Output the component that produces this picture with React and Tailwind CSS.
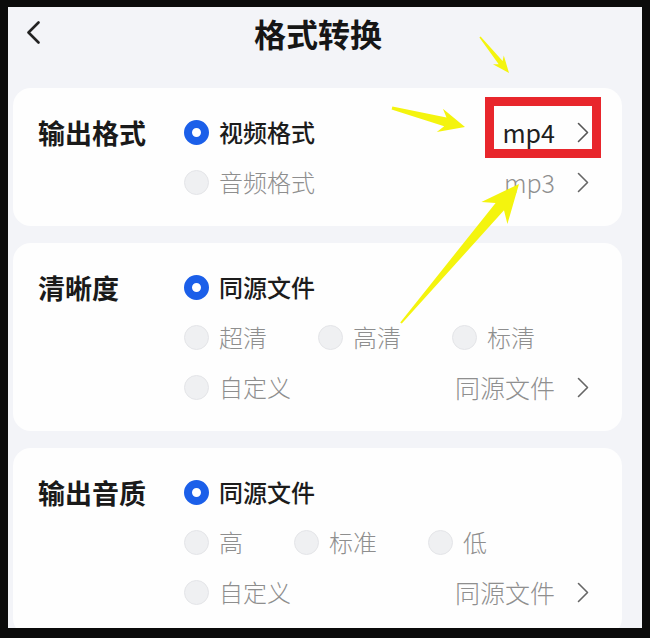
import React from "react";

const cjk = { fontFamily: '"Noto Sans CJK SC", "Noto Sans", sans-serif' };

function Chevron({ className = "" }) {
  return (
    <svg width="12" height="21" viewBox="0 0 12 21" className={className}>
      <path d="M1.5 1.5 L10.5 10.5 L1.5 19.5" fill="none" stroke="currentColor" strokeWidth="1.6" strokeLinecap="round" strokeLinejoin="round" />
    </svg>
  );
}

function Radio({ checked }) {
  if (checked) {
    return <span className="block w-[25px] h-[25px] rounded-full border-[8px] border-[#1b5fe9] bg-white shrink-0" />;
  }
  return <span className="block w-[25px] h-[25px] rounded-full border border-[#e4e5e8] bg-[#eff0f2] shrink-0" />;
}

function Option({ label, checked }) {
  return (
    <div className="flex items-center gap-[10px]">
      <Radio checked={checked} />
      <span className={checked ? "text-[24px] leading-none text-[#1c1c1c] font-medium" : "text-[24px] leading-none text-[#8e8e8e] font-light"}>
        {label}
      </span>
    </div>
  );
}

function Value({ text, dark }) {
  return (
    <div className="flex items-center gap-[22px]">
      <span className={dark ? "text-[25px] leading-none text-[#1f1f1f]" : "text-[25px] leading-none text-[#8f8f8f] font-light"}>{text}</span>
      <Chevron className={dark ? "text-[#555]" : "text-[#666]"} />
    </div>
  );
}

function Card({ label, rows }) {
  return (
    <div className="bg-[#fefefe] rounded-[18px] ml-[5px] mr-[20px] pl-[25px] pr-[33px] py-[19px] flex">
      <div className="w-[146px] h-[50px] flex items-center shrink-0">
        <span className="text-[27px] leading-none font-semibold text-[#1a1a1a]">{label}</span>
      </div>
      <div className="flex-1 flex flex-col">
        {rows.map((row, i) => (
          <div key={i} className="h-[50px] flex items-center justify-between">
            <div className="flex items-center gap-[51px]">
              {row.options.map((o) => (
                <Option key={o.label} label={o.label} checked={o.checked} />
              ))}
            </div>
            {row.value && <Value text={row.value} dark={row.dark} />}
          </div>
        ))}
      </div>
    </div>
  );
}

const arrows = [
  { t: [480, 37], p: [509, 73], L: 17, H: 7, w0: 1.5, w1: 5 },
  { t: [392, 108], p: [465, 127], L: 26, H: 12, w0: 3, w1: 9 },
  { t: [401, 323], p: [519, 184], L: 38, H: 17, w0: 2, w1: 11 },
];

function arrowPoints({ t, p, L, H, w0, w1 }) {
  const dx = p[0] - t[0];
  const dy = p[1] - t[1];
  const len = Math.hypot(dx, dy);
  const d = [dx / len, dy / len];
  const n = [-d[1], d[0]];
  const at = (base, along, side) => [base[0] + d[0] * along + n[0] * side, base[1] + d[1] * along + n[1] * side];
  const pts = [
    at(t, 0, w0 / 2),
    at(p, -L * 0.78, w1 / 2),
    at(p, -L, H),
    p,
    at(p, -L, -H),
    at(p, -L * 0.78, -w1 / 2),
    at(t, 0, -w0 / 2),
  ];
  return pts.map((q) => q[0].toFixed(1) + "," + q[1].toFixed(1)).join(" ");
}

export default function App() {
  return (
    <div className="relative w-[650px] h-[638px] bg-[#0b0b0b] pt-[7px] pl-[8px] pr-[8px] pb-[10px]" style={cjk}>
      <div className="h-full bg-[#f3f4f8] overflow-hidden">
        <div className="relative h-[52px] flex items-center justify-center pr-[14px]">
          <svg width="13" height="23" viewBox="0 0 13 23" className="absolute left-[19px] top-[14px] text-[#222]">
            <path d="M11.5 1.5 L1.5 11.5 L11.5 21.5" fill="none" stroke="currentColor" strokeWidth="2.6" strokeLinecap="round" strokeLinejoin="round" />
          </svg>
          <h1 className="text-[32px] leading-none font-bold text-[#161616]">格式转换</h1>
        </div>

        <div className="mt-[29px] flex flex-col gap-[17px]">
          <Card
            label="输出格式"
            rows={[
              { options: [{ label: "视频格式", checked: true }], value: "mp4", dark: true },
              { options: [{ label: "音频格式" }], value: "mp3" },
            ]}
          />
          <Card
            label="清晰度"
            rows={[
              { options: [{ label: "同源文件", checked: true }] },
              { options: [{ label: "超清" }, { label: "高清" }, { label: "标清" }] },
              { options: [{ label: "自定义" }], value: "同源文件" },
            ]}
          />
          <Card
            label="输出音质"
            rows={[
              { options: [{ label: "同源文件", checked: true }] },
              { options: [{ label: "高" }, { label: "标准" }, { label: "低" }] },
              { options: [{ label: "自定义" }], value: "同源文件" },
            ]}
          />
        </div>
      </div>

      {/* annotations drawn over the screenshot */}
      <div className="absolute left-[485px] top-[97px] w-[116px] h-[61px] border-[9px] border-[#e8262c] pointer-events-none" />
      <svg className="absolute inset-0 pointer-events-none" width="650" height="638" viewBox="0 0 650 638">
        {arrows.map((a, i) => (
          <polygon key={i} points={arrowPoints(a)} fill="#f4f40e" />
        ))}
      </svg>
    </div>
  );
}
